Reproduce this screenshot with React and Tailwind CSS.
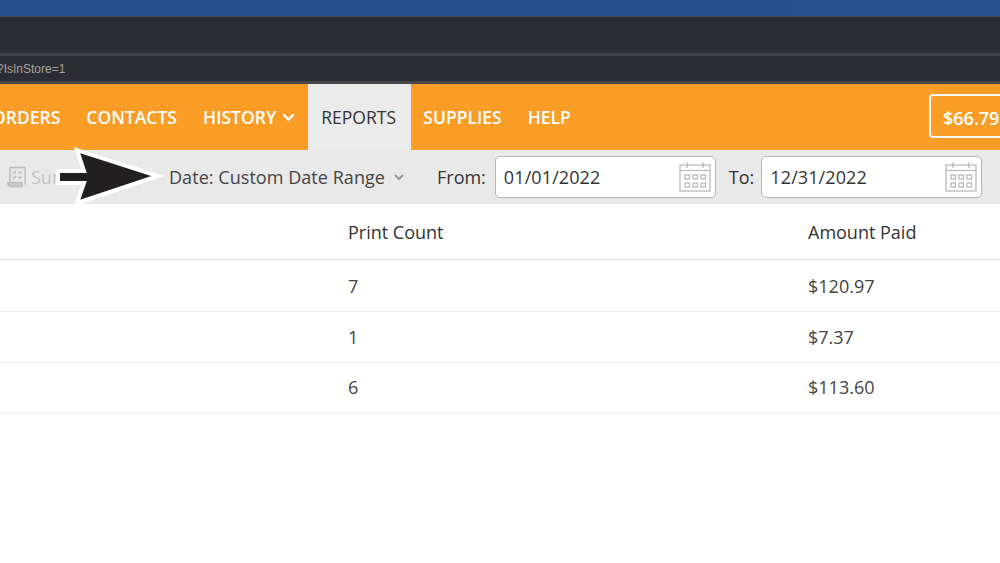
import React from "react";

function CalendarIcon() {
  return (
    <svg width="32" height="32" viewBox="0 0 32 32" fill="none" stroke="#b5b5b5" strokeWidth="1.2">
      <rect x="1" y="4" width="30" height="26" />
      <path d="M1 9.5h30M8 1v6M24 1v6" />
      <rect x="6" y="14" width="4.5" height="4" />
      <rect x="14" y="14" width="4.5" height="4" />
      <rect x="22" y="14" width="4.5" height="4" />
      <rect x="6" y="22" width="4.5" height="4" />
      <rect x="14" y="22" width="4.5" height="4" />
      <rect x="22" y="22" width="4.5" height="4" />
    </svg>
  );
}

function DateInput({ value }) {
  return (
    <div className="flex items-center justify-between w-[221px] h-[42px] bg-white border border-[#b4b4b4] rounded-[5px] pl-[8px] pr-1">
      <span className="text-[18px] text-[#333] tracking-[0.1px]">{value}</span>
      <CalendarIcon />
    </div>
  );
}

function NavItem({ children, className = "" }) {
  return (
    <span className={`px-[13px] text-[17.5px] font-semibold text-white ${className}`}>{children}</span>
  );
}

const rows = [
  { count: "7", paid: "$120.97", height: "h-[52px] pt-[1px]" },
  { count: "1", paid: "$7.37", height: "h-[51px]" },
  { count: "6", paid: "$113.60", height: "h-[50px]" },
];

export default function App() {
  return (
    <div className="relative w-[1000px] h-[563px] overflow-hidden bg-white font-['Open_Sans',sans-serif]">
      {/* browser chrome */}
      <div className="h-[16px] bg-gradient-to-r from-[#234e8c] to-[#27528f]" />
      <div className="h-[37px] bg-[#2c2d32] border-t border-[#4b4d52]" />
      <div className="h-[3px] bg-[#404145]" />
      <div className="h-[25px] bg-[#2c2d32] flex items-center font-['Liberation_Sans',sans-serif] text-[12px] text-[#a3a3a5] -ml-[3px]">
        ?IsInStore=1
      </div>
      <div className="h-[3px] bg-[#47484c]" />

      {/* nav */}
      <div className="h-[66px] bg-[#f99d27] flex items-center">
        <div className="flex items-center h-full -ml-[21px]">
          <NavItem>ORDERS</NavItem>
          <NavItem>CONTACTS</NavItem>
          <NavItem className="flex items-center gap-[6px]">
            HISTORY
            <svg width="13" height="9" viewBox="0 0 13 9" fill="none" stroke="#fff" strokeWidth="2.4">
              <path d="M1.5 1.5 6.5 6.5 11.5 1.5" />
            </svg>
          </NavItem>
          <span className="h-full flex items-center w-[103px] pl-[13px] bg-[#ebebeb] text-[17.5px] text-[#333]">REPORTS</span>
          <NavItem className="ml-[-1px]">SUPPLIES</NavItem>
          <NavItem>HELP</NavItem>
        </div>
        <div className="ml-auto -mr-[20px] w-[91px] h-[44px] mt-[-2px] border-2 border-white rounded-[4px] flex items-center pl-[12px] pt-[5px] text-[18px] font-semibold text-white whitespace-nowrap">
          $66.79
        </div>
      </div>

      {/* toolbar */}
      <div className="h-[54px] bg-[#e9e9e9] flex items-center">
        <div className="flex items-center w-[169px] pl-[7px] gap-[3px] text-[18px] text-[#c4c4c4] overflow-hidden">
          <svg width="21" height="22" viewBox="0 0 21 22" fill="none" stroke="#bdbdbd" strokeWidth="1.4" className="shrink-0">
            <path d="M3 1.5h15v17M3 1.5v15" />
            <path d="M1 16.5h14v4H4a3 3 0 0 1-3-3z" fill="#c9c9c9" />
            <path d="M6 6l1.2 1.2L9 5M6 11l1.2 1.2L9 10M11 6.5h4M11 11.5h4" />
          </svg>
          <span>Sum</span>
        </div>
        <div className="flex items-center text-[18px] text-[#444]">
          <span className="tracking-[0.05px]">Date: Custom Date Range</span>
          <svg width="10" height="7" viewBox="0 0 10 7" fill="none" stroke="#9a9a9a" strokeWidth="2" className="ml-[9px]">
            <path d="M1 1l4 4 4-4" />
          </svg>
          <span className="ml-[33px] mr-[9px] text-[#333]">From:</span>
          <DateInput value="01/01/2022" />
          <span className="ml-[13px] mr-[7px] text-[#333]">To:</span>
          <DateInput value="12/31/2022" />
        </div>
      </div>

      {/* table */}
      <div className="text-[18px]">
        <div className="grid grid-cols-[348px_460px_1fr] h-[56px] pt-[1px] items-center border-b border-[#dedede] text-[#333]">
          <span className="col-start-2">Print Count</span>
          <span>Amount Paid</span>
        </div>
        {rows.map((row) => (
          <div key={row.paid} className={`grid grid-cols-[348px_460px_1fr] ${row.height} items-center border-b border-[#eaeaea] text-[#444]`}>
            <span className="col-start-2">{row.count}</span>
            <span>{row.paid}</span>
          </div>
        ))}
      </div>

      {/* annotation arrow */}
      <svg className="absolute left-[50px] top-[144px]" width="120" height="66" viewBox="0 0 120 66">
        <path
          d="M8 27H34L27 6 108 32 27 59 34 39H8z"
          fill="#221f20"
          stroke="#fff"
          strokeWidth="4"
          strokeLinejoin="miter"
        />
      </svg>
    </div>
  );
}
